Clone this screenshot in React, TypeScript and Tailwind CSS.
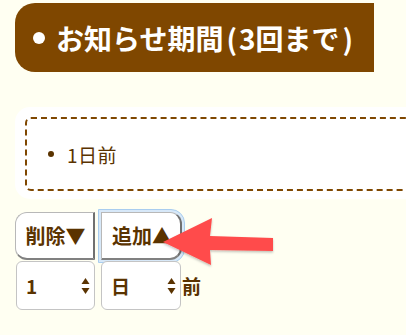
import React from "react";

const font = { fontFamily: '"Noto Sans CJK JP", "Noto Sans", sans-serif' };

function Updown() {
  return (
    <svg width="9" height="18" viewBox="0 0 9 18" className="block">
      <path d="M4.5 1 L8.5 7 L0.5 7 Z" fill="#5a3300" />
      <path d="M4.5 17 L8.5 11 L0.5 11 Z" fill="#5a3300" />
    </svg>
  );
}

export default function App() {
  return (
    <div
      className="relative w-[406px] h-[335px] overflow-hidden bg-[#fffff2] text-[#5a3300]"
      style={font}
    >
      <div className="pt-[3px]">
        <div className="ml-[15px] w-[359px] h-[69px] rounded-l-[20px] bg-[#7f4700] flex items-center pl-[18px] gap-[11px]">
          <span className="w-[12px] h-[12px] rounded-full bg-white shrink-0" />
          <span className="text-white font-bold text-[28px] leading-none whitespace-nowrap">
            お知らせ期間<span className="ml-[3px] mr-[2px]">(</span>3回まで<span className="ml-[3px]">)</span>
          </span>
        </div>
      </div>

      <div className="ml-[15px] mt-[35px] bg-white rounded-l-[15px] pt-[10px] pb-[8px] pl-[10px] w-[420px]">
        <div className="h-[74px] border-2 border-dashed border-[#7f4700] border-r-0 rounded-l-[6px] flex items-center pl-[21px] gap-[13px]">
          <span className="w-[6px] h-[6px] rounded-full bg-[#5a3300]" />
          <span className="text-[19px] leading-none tracking-[0.5px]">1日前</span>
        </div>
      </div>

      <div className="mt-[13px] ml-[15px] flex items-start">
        <button className="w-[80px] h-[48px] bg-white rounded-l-[12px] border border-[#b8b8b8] border-r-2 border-b-2 border-r-[#707070] border-b-[#808080] font-bold text-[20px] leading-none flex items-center justify-center pl-[2px]">
          削除▼
        </button>
        <div className="ml-[3px] -mt-[3px] p-[2px] rounded-r-[14px] border border-[#a9cdef] bg-[#d7e8f8]">
          <button className="w-[81px] h-[48px] bg-white rounded-r-[12px] border border-[#b8b8b8] border-r-2 border-b-2 border-r-[#707070] border-b-[#808080] font-bold text-[20px] leading-none flex items-center justify-center pl-[2px]">
            追加▲
          </button>
        </div>
      </div>

      <div className="ml-[16px] -mt-[2px] flex items-center">
        <div className="w-[79px] h-[49px] bg-white rounded-[6px] border border-[#c4c4c4] flex items-center justify-between pl-[9px] pr-[4px]">
          <span className="font-bold text-[19px] leading-none">1</span>
          <Updown />
        </div>
        <div className="ml-[6px] w-[80px] h-[49px] bg-white rounded-[6px] border border-[#c4c4c4] flex items-center justify-between pl-[9px] pr-[4px]">
          <span className="font-bold text-[19px] leading-none">日</span>
          <Updown />
        </div>
        <span className="ml-[1px] font-bold text-[19px] leading-none">前</span>
      </div>

      <svg
        className="absolute left-0 top-0 pointer-events-none"
        width="406"
        height="335"
        viewBox="0 0 406 335"
      >
        <defs>
          <filter id="sh" x="-10%" y="-10%" width="120%" height="130%">
            <feDropShadow dx="0" dy="1.5" stdDeviation="1.2" floodColor="#000" floodOpacity="0.25" />
          </filter>
        </defs>
        <path
          d="M163 242 L212 218 L210 236 L273 238 L273 251 L210 250 L211 265 Z"
          fill="#ff4b4b"
          filter="url(#sh)"
        />
      </svg>
    </div>
  );
}
